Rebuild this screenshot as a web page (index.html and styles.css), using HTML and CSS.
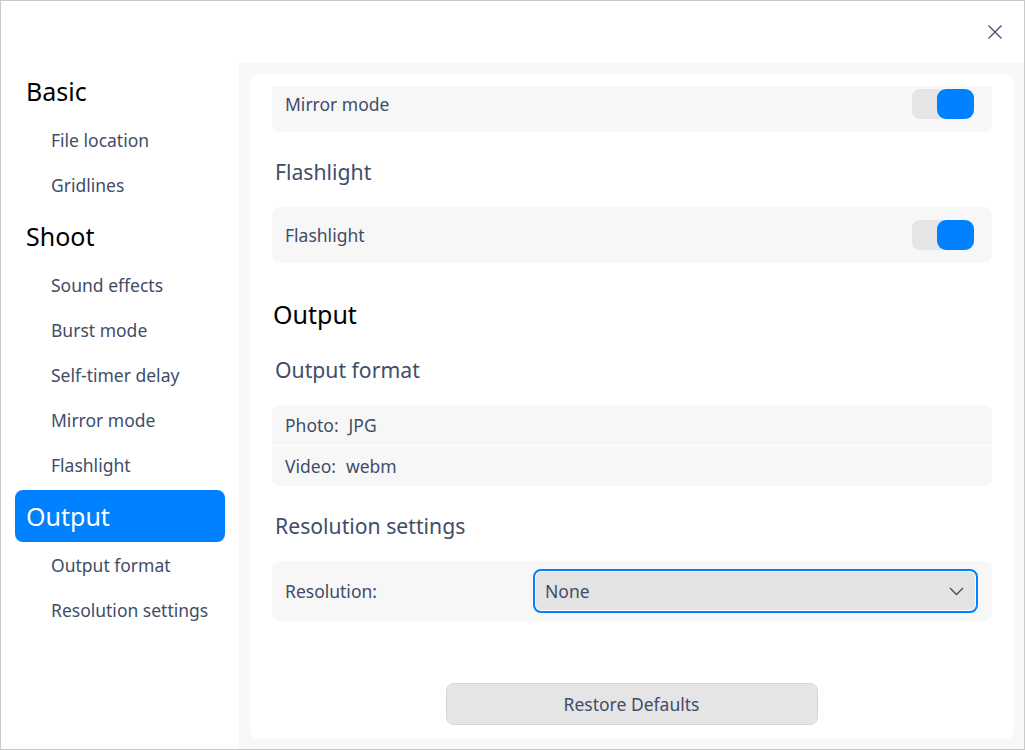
FILE: index.html
```html
<!DOCTYPE html>
<html lang="en">
<head>
<meta charset="utf-8">
<title>Settings</title>
<link rel="stylesheet" href="styles.css">
</head>
<body>
<div class="window">
  <div class="titlebar">
    <button class="close" aria-label="Close">
      <svg width="14" height="14" viewBox="0 0 14 14"><path d="M0.5 0.5 L13.5 13.5 M13.5 0.5 L0.5 13.5" stroke="#414d68" stroke-width="1.3" fill="none"/></svg>
    </button>
  </div>
  <div class="main">
    <nav class="sidebar">
      <div class="nav-group">Basic</div>
      <div class="nav-item">File location</div>
      <div class="nav-item">Gridlines</div>
      <div class="nav-group">Shoot</div>
      <div class="nav-item">Sound effects</div>
      <div class="nav-item">Burst mode</div>
      <div class="nav-item">Self-timer delay</div>
      <div class="nav-item">Mirror mode</div>
      <div class="nav-item">Flashlight</div>
      <div class="nav-group active">Output</div>
      <div class="nav-item">Output format</div>
      <div class="nav-item">Resolution settings</div>
    </nav>
    <section class="content">
      <div class="card">
        <div class="viewport">
          <div class="scroll">
            <div class="row">
              <span class="row-label">Mirror mode</span>
              <div class="toggle"><div class="knob"></div></div>
            </div>
            <div class="sub-title">Flashlight</div>
            <div class="row">
              <span class="row-label">Flashlight</span>
              <div class="toggle"><div class="knob"></div></div>
            </div>
            <div class="group-title">Output</div>
            <div class="sub-title first">Output format</div>
            <div class="format-box">
              <div class="format-row"><span class="fmt-label">Photo:</span><span>JPG</span></div>
              <div class="format-row"><span class="fmt-label">Video:</span><span>webm</span></div>
            </div>
            <div class="sub-title">Resolution settings</div>
            <div class="row res-row">
              <span class="row-label res-label">Resolution:</span>
              <div class="combo">
                <span>None</span>
                <svg width="15" height="9" viewBox="0 0 15 9"><path d="M1 1 L7.5 7.5 L14 1" stroke="#414d68" stroke-width="1.4" fill="none"/></svg>
              </div>
            </div>
          </div>
        </div>
        <div class="footer">
          <button class="restore">Restore Defaults</button>
        </div>
      </div>
    </section>
  </div>
</div>
</body>
</html>
```

FILE: styles.css
```css
* { box-sizing: border-box; }
html, body { margin: 0; padding: 0; background: #fff; }
body { font-family: "Noto Sans", "Open Sans", sans-serif; color: #414d68; }

.window {
  width: 1025px;
  height: 750px;
  border: 1px solid #c9c9c9;
  background: #fff;
  display: flex;
  flex-direction: column;
  overflow: hidden;
}

.titlebar {
  height: 62px;
  display: flex;
  align-items: center;
  justify-content: flex-end;
  padding-right: 22px;
}
.close {
  border: 0;
  background: transparent;
  padding: 0;
  width: 14px;
  height: 14px;
  display: flex;
}

.main {
  flex: 1;
  display: flex;
  min-height: 0;
}

.sidebar {
  width: 238px;
  padding: 2px 14px 0 14px;
  display: flex;
  flex-direction: column;
}
.nav-group {
  height: 52px;
  margin-top: 3px;
  padding-left: 11px;
  display: flex;
  align-items: center;
  font-size: 25px;
  color: #000;
  border-radius: 8px;
}
.nav-group:first-child { margin-top: 0; }
.nav-group.active { background: #0081ff; color: #fff; }
.nav-item {
  height: 45px;
  padding-left: 36px;
  display: flex;
  align-items: center;
  font-size: 17.5px;
  color: #414d68;
}

.content {
  flex: 1;
  background: #f8f8f8;
  padding: 11px 10px 10px 11px;
  display: flex;
}
.card {
  flex: 1;
  background: #fff;
  border-radius: 8px;
  padding: 12px 22px 13px 22px;
  display: flex;
  flex-direction: column;
}
.viewport {
  flex: 1;
  overflow: hidden;
}
.scroll { margin-top: -10px; }

.row {
  height: 56px;
  background: #f7f7f7;
  border-radius: 8px;
  display: flex;
  align-items: center;
  justify-content: space-between;
  padding: 0 18px 0 13px;
}
.row-label { font-size: 17.5px; color: #414d68; }

.toggle {
  width: 62px;
  height: 30px;
  background: #e5e5e5;
  border-radius: 8px;
  display: flex;
  justify-content: flex-end;
}
.knob {
  width: 37px;
  height: 30px;
  background: #0081ff;
  border-radius: 9px;
}

.sub-title {
  height: 28px;
  margin: 25px 0 22px;
  padding-left: 3px;
  display: flex;
  align-items: center;
  font-size: 21.2px;
  color: #414d68;
}
.sub-title.first { margin-top: 24px; }
.group-title {
  height: 34px;
  margin-top: 34px;
  padding-left: 1px;
  display: flex;
  align-items: center;
  font-size: 25px;
  color: #000;
}

.format-box {
  border-radius: 8px;
  overflow: hidden;
  display: flex;
  flex-direction: column;
  gap: 1px;
  background: #fff;
}
.format-row {
  height: 40px;
  background: #f7f7f7;
  display: flex;
  align-items: center;
  padding-left: 13px;
  font-size: 17.5px;
  color: #414d68;
}
.fmt-label { margin-right: 10px; }

.res-row { height: 60px; padding-right: 14px; }
.res-label { width: 248px; }
.combo {
  flex: 1;
  height: 44px;
  border: 2px solid #0081ff;
  border-radius: 8px;
  background: #e3e3e3;
  box-shadow: inset 0 0 0 1px #fff;
  display: flex;
  align-items: center;
  justify-content: space-between;
  padding: 0 12px 0 10px;
  font-size: 17.5px;
  color: #414d68;
}

.footer {
  display: flex;
  justify-content: center;
  padding-right: 1px;
}
.restore {
  width: 372px;
  height: 42px;
  margin-bottom: 1px;
  border: 1px solid #d6d6d6;
  border-radius: 8px;
  background: #e5e5e5;
  font-family: "Noto Sans", "Open Sans", sans-serif;
  font-size: 17.5px;
  color: #414d68;
  padding: 0;
}
```
